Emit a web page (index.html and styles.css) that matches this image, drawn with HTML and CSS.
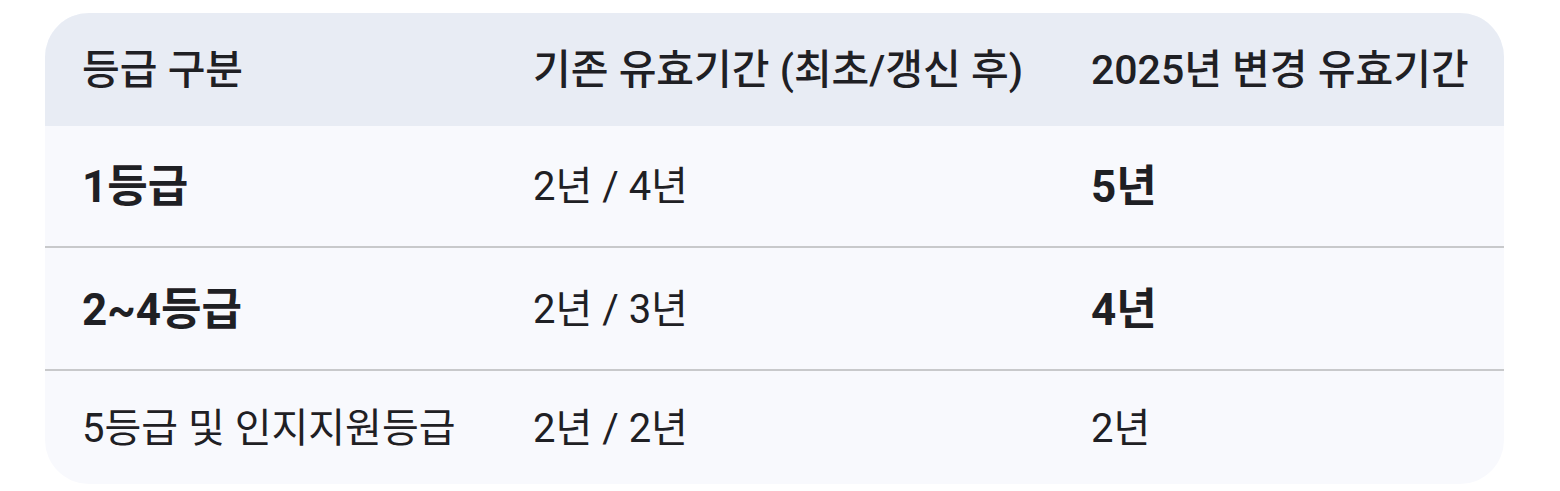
FILE: index.html
```html
<!DOCTYPE html>
<html lang="ko">
<head>
<meta charset="utf-8">
<link rel="stylesheet" href="styles.css">
</head>
<body>
<div class="wrap">
  <table class="grade-table">
    <colgroup>
      <col class="c1">
      <col class="c2">
      <col class="c3">
    </colgroup>
    <thead>
      <tr>
        <th>등급 구분</th>
        <th>기존 유효기간 (최초/갱신 후)</th>
        <th>2025년 변경 유효기간</th>
      </tr>
    </thead>
    <tbody>
      <tr class="row-a">
        <td class="strong">1등급</td>
        <td>2년 / 4년</td>
        <td class="strong">5년</td>
      </tr>
      <tr class="row-b">
        <td class="strong">2~4등급</td>
        <td>2년 / 3년</td>
        <td class="strong">4년</td>
      </tr>
      <tr class="row-c">
        <td>5등급 및 인지지원등급</td>
        <td>2년 / 2년</td>
        <td>2년</td>
      </tr>
    </tbody>
  </table>
</div>
</body>
</html>
```

FILE: styles.css
```css
html, body {
  margin: 0;
  padding: 0;
  background: #ffffff;
}
body {
  font-family: "Roboto", "Noto Sans CJK KR", sans-serif;
  color: #1f2024;
}
.wrap {
  padding: 13px 56px 7px 45px;
}
.grade-table {
  width: 1459px;
  border-collapse: separate;
  border-spacing: 0;
  border-radius: 44px;
  overflow: hidden;
  table-layout: fixed;
  background: #f8f9fd;
}
.c1 { width: 451px; }
.c2 { width: 558px; }
.c3 { width: 450px; }
.grade-table th {
  background: #e8ecf4;
  height: 113px;
  padding: 0 0 7px 37px;
  text-align: left;
  font-size: 41px;
  font-weight: 500;
  vertical-align: middle;
  box-sizing: border-box;
  white-space: nowrap;
}
.grade-table td {
  padding: 0 0 6px 37px;
  font-size: 40px;
  font-weight: 400;
  vertical-align: middle;
  box-sizing: border-box;
  white-space: nowrap;
}
.grade-table td.strong {
  font-size: 44px;
  font-weight: 700;
}
.row-a td {
  height: 122px;
  border-bottom: 2px solid #c8c9cb;
}
.row-b td {
  height: 123px;
  border-bottom: 2px solid #c8c9cb;
}
.row-c td {
  height: 113px;
}
```
